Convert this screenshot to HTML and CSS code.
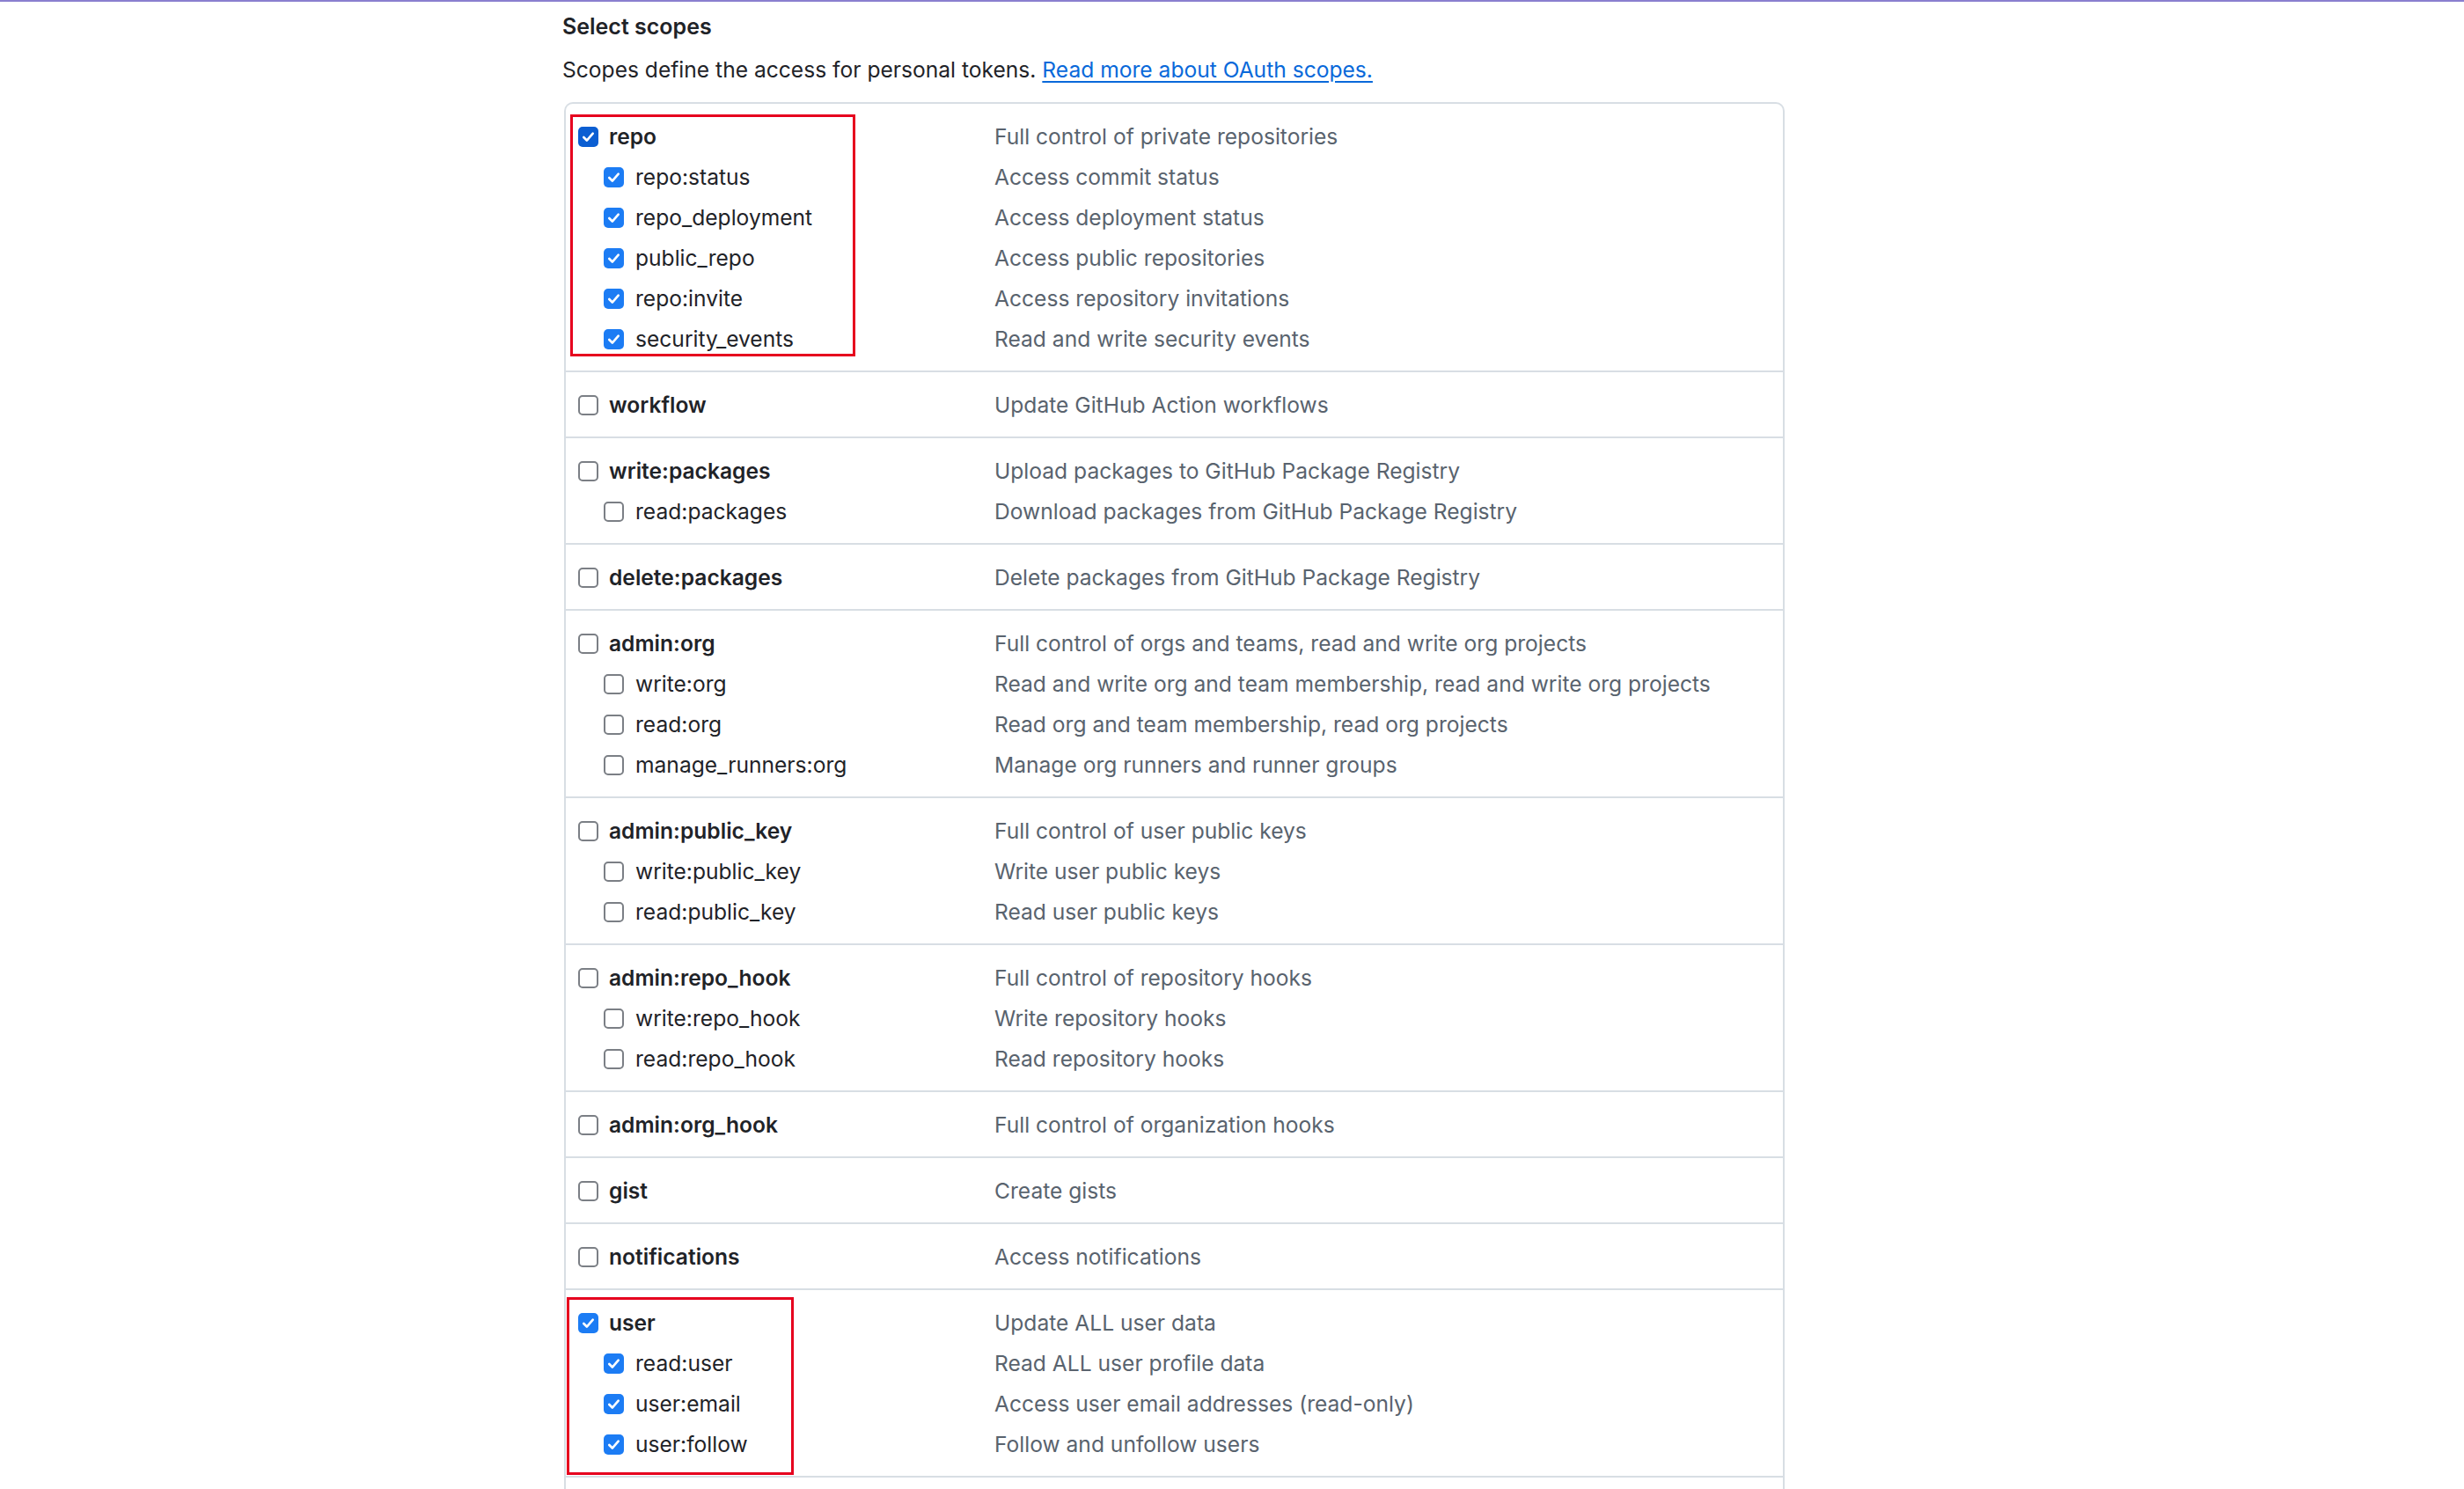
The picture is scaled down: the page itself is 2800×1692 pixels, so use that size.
FILE: index.html
```html
<!DOCTYPE html>
<html lang="en">
<head>
<meta charset="utf-8">
<title>Select scopes</title>
<link rel="stylesheet" href="styles.css">
</head>
<body>
<div class="topline"></div>
<main class="page">
  <section class="scopes">
    <h3 class="scopes-title">Select scopes</h3>
    <p class="scopes-note">Scopes define the access for personal tokens. <a href="#" class="link">Read more about OAuth scopes.</a></p>

    <div class="scope-box">
      <div class="group">
        <div class="row parent"><label class="lbl"><span class="cb checked focus"><svg viewBox="0 0 16 16"><path d="M3.6 8.4l3 3L12.4 4.8"/></svg></span>repo</label><span class="desc">Full control of private repositories</span></div>
        <div class="row child"><label class="lbl"><span class="cb checked"><svg viewBox="0 0 16 16"><path d="M3.6 8.4l3 3L12.4 4.8"/></svg></span>repo:status</label><span class="desc">Access commit status</span></div>
        <div class="row child"><label class="lbl"><span class="cb checked"><svg viewBox="0 0 16 16"><path d="M3.6 8.4l3 3L12.4 4.8"/></svg></span>repo_deployment</label><span class="desc">Access deployment status</span></div>
        <div class="row child"><label class="lbl"><span class="cb checked"><svg viewBox="0 0 16 16"><path d="M3.6 8.4l3 3L12.4 4.8"/></svg></span>public_repo</label><span class="desc">Access public repositories</span></div>
        <div class="row child"><label class="lbl"><span class="cb checked"><svg viewBox="0 0 16 16"><path d="M3.6 8.4l3 3L12.4 4.8"/></svg></span>repo:invite</label><span class="desc">Access repository invitations</span></div>
        <div class="row child"><label class="lbl"><span class="cb checked"><svg viewBox="0 0 16 16"><path d="M3.6 8.4l3 3L12.4 4.8"/></svg></span>security_events</label><span class="desc">Read and write security events</span></div>
        <div class="highlight hl-repo"></div>
      </div>

      <div class="group">
        <div class="row parent"><label class="lbl"><span class="cb"></span>workflow</label><span class="desc">Update GitHub Action workflows</span></div>
      </div>

      <div class="group">
        <div class="row parent"><label class="lbl"><span class="cb"></span>write:packages</label><span class="desc">Upload packages to GitHub Package Registry</span></div>
        <div class="row child"><label class="lbl"><span class="cb"></span>read:packages</label><span class="desc">Download packages from GitHub Package Registry</span></div>
      </div>

      <div class="group">
        <div class="row parent"><label class="lbl"><span class="cb"></span>delete:packages</label><span class="desc">Delete packages from GitHub Package Registry</span></div>
      </div>

      <div class="group">
        <div class="row parent"><label class="lbl"><span class="cb"></span>admin:org</label><span class="desc">Full control of orgs and teams, read and write org projects</span></div>
        <div class="row child"><label class="lbl"><span class="cb"></span>write:org</label><span class="desc">Read and write org and team membership, read and write org projects</span></div>
        <div class="row child"><label class="lbl"><span class="cb"></span>read:org</label><span class="desc">Read org and team membership, read org projects</span></div>
        <div class="row child"><label class="lbl"><span class="cb"></span>manage_runners:org</label><span class="desc">Manage org runners and runner groups</span></div>
      </div>

      <div class="group">
        <div class="row parent"><label class="lbl"><span class="cb"></span>admin:public_key</label><span class="desc">Full control of user public keys</span></div>
        <div class="row child"><label class="lbl"><span class="cb"></span>write:public_key</label><span class="desc">Write user public keys</span></div>
        <div class="row child"><label class="lbl"><span class="cb"></span>read:public_key</label><span class="desc">Read user public keys</span></div>
      </div>

      <div class="group">
        <div class="row parent"><label class="lbl"><span class="cb"></span>admin:repo_hook</label><span class="desc">Full control of repository hooks</span></div>
        <div class="row child"><label class="lbl"><span class="cb"></span>write:repo_hook</label><span class="desc">Write repository hooks</span></div>
        <div class="row child"><label class="lbl"><span class="cb"></span>read:repo_hook</label><span class="desc">Read repository hooks</span></div>
      </div>

      <div class="group">
        <div class="row parent"><label class="lbl"><span class="cb"></span>admin:org_hook</label><span class="desc">Full control of organization hooks</span></div>
      </div>

      <div class="group">
        <div class="row parent"><label class="lbl"><span class="cb"></span>gist</label><span class="desc">Create gists</span></div>
      </div>

      <div class="group">
        <div class="row parent"><label class="lbl"><span class="cb"></span>notifications</label><span class="desc">Access notifications</span></div>
      </div>

      <div class="group">
        <div class="row parent"><label class="lbl"><span class="cb checked"><svg viewBox="0 0 16 16"><path d="M3.6 8.4l3 3L12.4 4.8"/></svg></span>user</label><span class="desc">Update ALL user data</span></div>
        <div class="row child"><label class="lbl"><span class="cb checked"><svg viewBox="0 0 16 16"><path d="M3.6 8.4l3 3L12.4 4.8"/></svg></span>read:user</label><span class="desc">Read ALL user profile data</span></div>
        <div class="row child"><label class="lbl"><span class="cb checked"><svg viewBox="0 0 16 16"><path d="M3.6 8.4l3 3L12.4 4.8"/></svg></span>user:email</label><span class="desc">Access user email addresses (read-only)</span></div>
        <div class="row child"><label class="lbl"><span class="cb checked"><svg viewBox="0 0 16 16"><path d="M3.6 8.4l3 3L12.4 4.8"/></svg></span>user:follow</label><span class="desc">Follow and unfollow users</span></div>
        <div class="highlight hl-user"></div>
      </div>
    </div>
  </section>
</main>
</body>
</html>
```

FILE: styles.css
```css
html, body {
  margin: 0;
  padding: 0;
  background: #ffffff;
}

body {
  font-family: Inter, "Liberation Sans", Arial, sans-serif;
  color: #1f2328;
  overflow: hidden;
}

.topline {
  height: 2px;
  background: #8a7fcf;
}

.page {
  padding-left: 639px;
  width: 1389px;
}

.scopes-title {
  margin: 11px 0 0 0;
  font-size: 25px;
  line-height: 34px;
  font-weight: 600;
  color: #1f2328;
}

.scopes-note {
  margin: 15px 0 0 0;
  font-size: 24.6px;
  line-height: 34px;
  color: #1f2328;
}

.link {
  color: #0969da;
  text-decoration: underline;
  text-underline-offset: 4px;
  text-decoration-thickness: 2px;
}

.scope-box {
  margin: 20px 0 0 2px;
  border: 2px solid #d8dee4;
  border-bottom: none;
  border-radius: 10px 10px 0 0;
  padding-bottom: 40px;
}

.group {
  position: relative;
  padding: 14px 0 13px 14px;
  border-top: 2px solid #d8dee4;
}

.group:first-child {
  border-top: none;
}

.group:last-child {
  border-bottom: 2px solid #d8dee4;
}

.row {
  display: grid;
  grid-template-columns: 473px 1fr;
  align-items: center;
  height: 46px;
  font-size: 24.6px;
}

.lbl {
  display: flex;
  align-items: center;
  gap: 12px;
  color: #1f2328;
}

.parent .lbl {
  font-weight: 600;
}

.child .lbl {
  padding-left: 29px;
  gap: 13px;
}

.desc {
  color: #59636e;
}

.cb {
  width: 23px;
  height: 23px;
  box-sizing: border-box;
  border: 2px solid #7b7f85;
  border-radius: 5px;
  background: #ffffff;
  display: flex;
  align-items: center;
  justify-content: center;
  flex: none;
}

.cb.checked {
  border: none;
  background: #1c7cf4;
}

.cb.checked.focus {
  background: #0b5ed2;
}

.cb svg {
  width: 19px;
  height: 19px;
  fill: none;
  stroke: #ffffff;
  stroke-width: 2.2;
  stroke-linecap: round;
  stroke-linejoin: round;
}

.highlight {
  position: absolute;
  box-sizing: border-box;
  border: 3px solid #e6001e;
  pointer-events: none;
}

.hl-repo {
  left: 5px;
  top: 12px;
  width: 324px;
  height: 275px;
}

.hl-user {
  left: 1px;
  top: 8px;
  width: 258px;
  height: 202px;
}
```
